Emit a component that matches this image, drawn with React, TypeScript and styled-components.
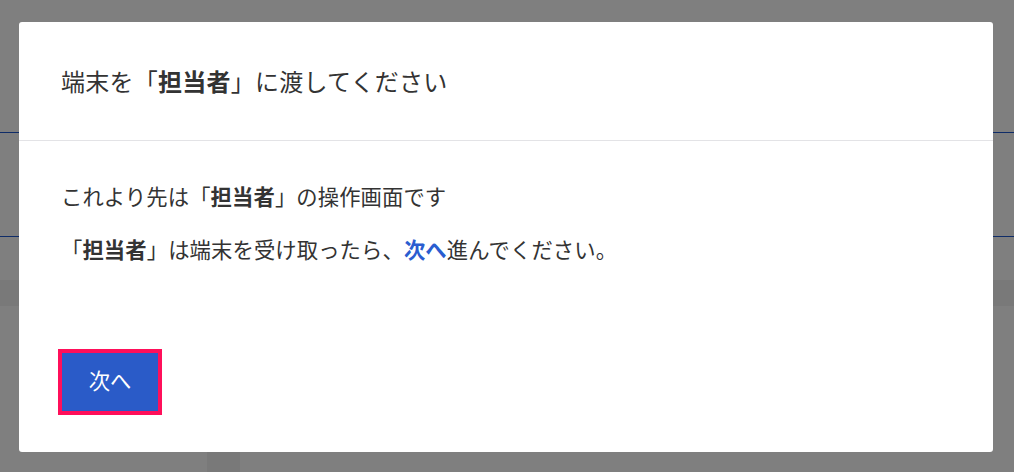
import React from "react";
import styled, { createGlobalStyle } from "styled-components";

const Global = createGlobalStyle`
  html, body { margin: 0; padding: 0; }
  body {
    width: 1014px;
    height: 472px;
    overflow: hidden;
    background: #ffffff;
    font-family: "Noto Sans CJK JP", "Noto Sans", sans-serif;
    text-spacing-trim: space-all;
  }
`;

const Page = styled.div`
  width: 1014px;
  height: 472px;
  display: flex;
  flex-direction: column;
  background: #ffffff;
`;

const PageRow = styled.div<{ $h: number; $line?: boolean; $shade?: boolean }>`
  height: ${(p) => p.$h}px;
  flex: none;
  background: ${(p) => (p.$shade ? "#f2f2f2" : "transparent")};
  border-bottom: ${(p) => (p.$line ? "1px solid #1e58d0" : "none")};
  box-sizing: border-box;
`;

const FooterRow = styled.div`
  flex: 1;
  display: flex;
  padding-left: 207px;
`;

const FooterBlock = styled.div`
  width: 33px;
  background: #f2f2f2;
`;

const Overlay = styled.div`
  position: fixed;
  inset: 0;
  background: rgba(0, 0, 0, 0.5);
  padding: 22px 21px 20px 19px;
  box-sizing: border-box;
  display: flex;
`;

const Dialog = styled.div`
  flex: 1;
  background: #ffffff;
  border-radius: 3px;
  display: flex;
  flex-direction: column;
  color: #333333;
`;

const Header = styled.div`
  height: 119px;
  box-sizing: border-box;
  padding: 0 42px;
  display: flex;
  align-items: center;
  border-bottom: 1px solid #e3e3e6;
`;

const Title = styled.h2`
  margin: 0;
  font-size: 24px;
  font-weight: 400;
  line-height: 34px;
  letter-spacing: 0.25px;
`;

const Body = styled.div`
  flex: 1;
  padding: 39px 42px 37px;
  display: flex;
  flex-direction: column;
`;

const Para = styled.p`
  margin: 0 0 21px;
  font-size: 21.33px;
  line-height: 32px;
  letter-spacing: 0.1px;
`;

const Strong = styled.strong`
  font-weight: 700;
`;

const Link = styled.span`
  color: #2a5dd0;
  font-weight: 700;
`;

const Actions = styled.div`
  margin-top: auto;
  display: flex;
`;

const NextButton = styled.button`
  width: 104px;
  height: 66px;
  box-sizing: border-box;
  margin-left: -3px;
  border: 4px solid #ff0f5a;
  background: #2a5bc8;
  color: #ffffff;
  font-family: inherit;
  font-size: 21.33px;
  line-height: 28px;
  padding: 0 0 4px;
  cursor: pointer;
`;

export default function App() {
  return (
    <>
      <Global />
      <Page>
        <PageRow $h={133} $line />
        <PageRow $h={104} $line />
        <PageRow $h={43} />
        <PageRow $h={26} $shade />
        <PageRow $h={146} />
        <FooterRow>
          <FooterBlock />
        </FooterRow>
      </Page>
      <Overlay>
        <Dialog role="dialog">
          <Header>
            <Title>
              端末を「<Strong>担当者</Strong>」に渡してください
            </Title>
          </Header>
          <Body>
            <Para>
              これより先は「<Strong>担当者</Strong>」の操作画面です
            </Para>
            <Para>
              「<Strong>担当者</Strong>」は端末を受け取ったら、<Link>次へ</Link>進んでください。
            </Para>
            <Actions>
              <NextButton>次へ</NextButton>
            </Actions>
          </Body>
        </Dialog>
      </Overlay>
    </>
  );
}
